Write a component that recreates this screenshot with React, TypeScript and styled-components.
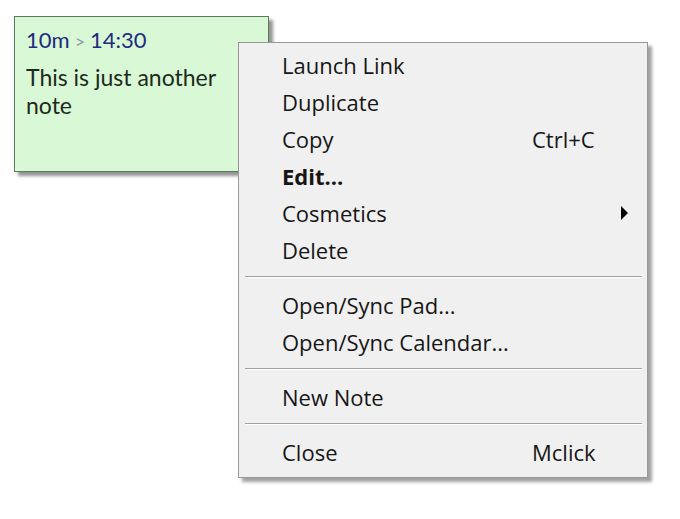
import * as React from 'react';
import styled, { createGlobalStyle } from 'styled-components';

const GlobalStyle = createGlobalStyle`
  html, body {
    margin: 0;
    padding: 0;
    background: #ffffff;
  }
  body {
    font-family: "Open Sans", "Noto Sans", sans-serif;
  }
`;

const Desktop = styled.div`
  position: relative;
  width: 680px;
  height: 519px;
  padding: 16px 0 0 14px;
  box-sizing: border-box;
  overflow: hidden;
`;

const Note = styled.div`
  width: 255px;
  height: 156px;
  box-sizing: border-box;
  padding: 9px 11px;
  background: #d9f8d6;
  border: 1px solid #5b7b5b;
  box-shadow: 4px 4px 3px rgba(60, 60, 60, 0.55);
  font-family: Lato, "Open Sans", sans-serif;
  font-size: 22px;
`;

const NoteHeader = styled.div`
  line-height: 28px;
  margin-bottom: 8px;
  color: #1f2b80;
`;

const Arrow = styled.span`
  color: #8b93ad;
  font-size: 18px;
  margin: 0 5px;
`;

const NoteBody = styled.div`
  line-height: 28px;
  font-size: 23px;
  color: #1c2a1c;
`;

const Menu = styled.div`
  position: absolute;
  left: 238px;
  top: 42px;
  width: 410px;
  box-sizing: border-box;
  padding: 3px 0 7px;
  background: #f0f0f0;
  border: 1px solid #979797;
  box-shadow: 4px 4px 3px rgba(70, 70, 70, 0.5);
  font-size: 22px;
  color: #161616;
`;

const Item = styled.div<{ $bold?: boolean }>`
  display: grid;
  grid-template-columns: 250px 1fr 14px;
  align-items: center;
  height: 37px;
  padding: 0 19px 0 43px;
  font-weight: ${(p) => (p.$bold ? 700 : 400)};
`;

const Shortcut = styled.span`
  white-space: nowrap;
`;

const SubArrow = styled.span`
  justify-self: end;
  width: 0;
  height: 0;
  border-top: 7px solid transparent;
  border-bottom: 7px solid transparent;
  border-left: 7px solid #000000;
`;

const Separator = styled.div`
  margin: 8px 5px 8px 6px;
  height: 1px;
  background: #a0a0a0;
  border-bottom: 1px solid #ffffff;
`;

type Entry =
  | { label: string; shortcut?: string; bold?: boolean; submenu?: boolean }
  | 'sep';

const entries: Entry[] = [
  { label: 'Launch Link' },
  { label: 'Duplicate' },
  { label: 'Copy', shortcut: 'Ctrl+C' },
  { label: 'Edit...', bold: true },
  { label: 'Cosmetics', submenu: true },
  { label: 'Delete' },
  'sep',
  { label: 'Open/Sync Pad...' },
  { label: 'Open/Sync Calendar...' },
  'sep',
  { label: 'New Note' },
  'sep',
  { label: 'Close', shortcut: 'Mclick' },
];

function App() {
  return (
    <Desktop>
      <GlobalStyle />
      <Note>
        <NoteHeader>
          10m<Arrow>&gt;</Arrow>14:30
        </NoteHeader>
        <NoteBody>
          This is just another
          <br />
          note
        </NoteBody>
      </Note>
      <Menu>
        {entries.map((e, i) =>
          e === 'sep' ? (
            <Separator key={i} />
          ) : (
            <Item key={i} $bold={e.bold}>
              <span>{e.label}</span>
              <Shortcut>{e.shortcut}</Shortcut>
              {e.submenu ? <SubArrow /> : <span />}
            </Item>
          )
        )}
      </Menu>
    </Desktop>
  );
}

export default App;
